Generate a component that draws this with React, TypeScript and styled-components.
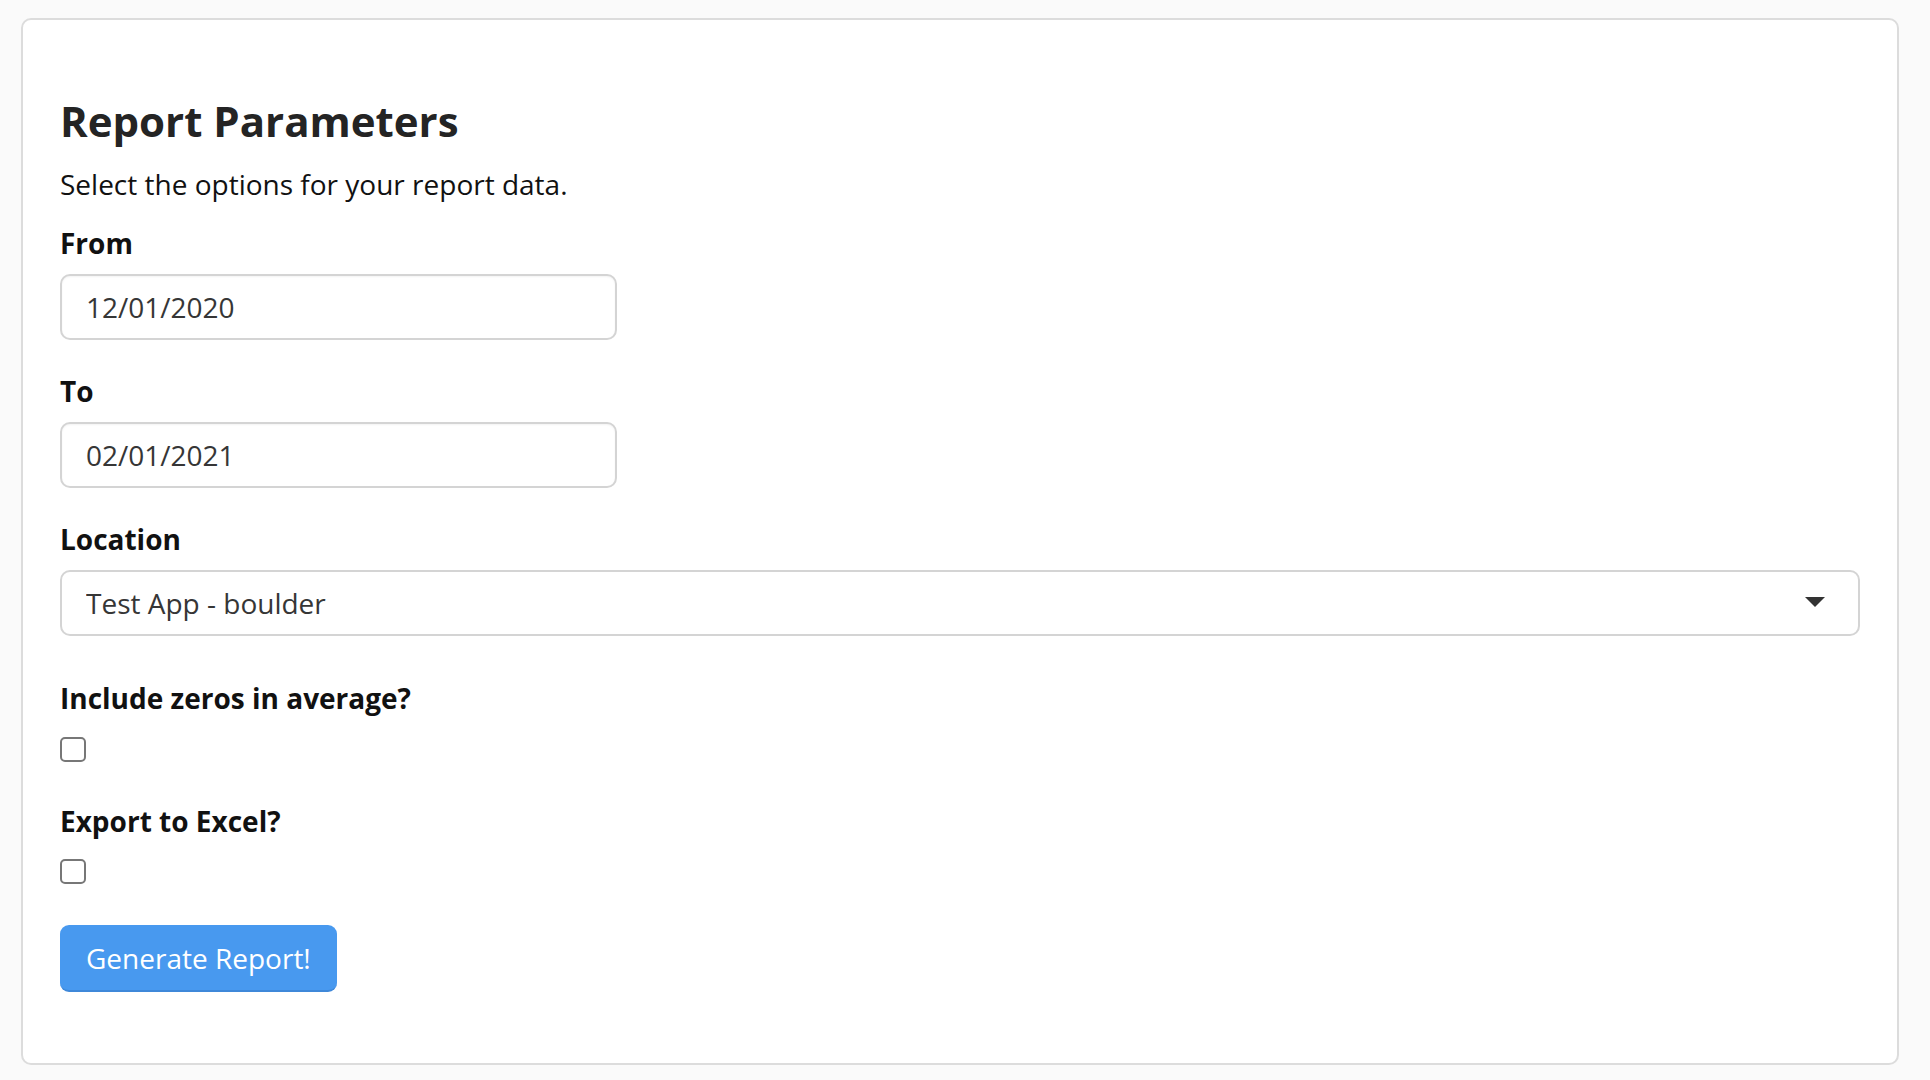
import React, { useState } from 'react';
import styled, { createGlobalStyle } from 'styled-components';

const GlobalStyle = createGlobalStyle`
  html, body {
    margin: 0;
    padding: 0;
    background: #fafafa;
  }
  body {
    font-family: "Open Sans", "Noto Sans", sans-serif;
    color: #111;
  }
  * {
    box-sizing: border-box;
  }
`;

const Page = styled.div`
  padding: 18px 31px 17px 21px;
`;

const Card = styled.div`
  background: #fff;
  border: 2px solid #dcdcdc;
  border-radius: 10px;
  padding: 75px 37px 71px 37px;
`;

const Title = styled.h2`
  margin: 0 0 16px;
  font-size: 42px;
  line-height: 52px;
  font-weight: 700;
  color: #242424;
`;

const Subtitle = styled.p`
  margin: 0 0 19px;
  font-size: 28px;
  line-height: 42px;
  color: #111;
`;

const Field = styled.div<{ $gap?: number }>`
  display: flex;
  flex-direction: column;
  align-items: flex-start;
  margin-bottom: ${(p) => p.$gap ?? 32}px;
`;

const Label = styled.label<{ $space?: number }>`
  font-size: 28px;
  line-height: 39px;
  font-weight: 700;
  color: #111;
  margin-bottom: ${(p) => p.$space ?? 11}px;
`;

const Input = styled.input`
  width: 557px;
  height: 66px;
  padding: 0 24px;
  border: 2px solid #d4d4d4;
  border-radius: 10px;
  font-family: "Open Sans", "Noto Sans", sans-serif;
  font-size: 28px;
  color: #363636;
  background: #fff;
  box-shadow: inset 0 1px 2px rgba(10, 10, 10, 0.05);
  outline: none;
`;

const SelectWrap = styled.div`
  position: relative;
  width: 100%;
`;

const Select = styled.select`
  width: 100%;
  height: 66px;
  padding: 0 70px 0 24px;
  border: 2px solid #d4d4d4;
  border-radius: 10px;
  font-family: "Open Sans", "Noto Sans", sans-serif;
  font-size: 28px;
  color: #363636;
  background: #fff;
  appearance: none;
  outline: none;
`;

const Caret = styled.svg`
  position: absolute;
  right: 35px;
  top: 27px;
  pointer-events: none;
`;

const Checkbox = styled.input`
  appearance: none;
  margin: 0;
  width: 26px;
  height: 25px;
  border: 2px solid #777;
  border-radius: 5px;
  background: #fff;
  cursor: pointer;

  &:checked {
    background: #4899ef;
    border-color: #4899ef;
  }
`;

const Button = styled.button`
  height: 67px;
  padding: 0 26px;
  background: #4899ef;
  color: #fff;
  border: none;
  border-bottom: 2px solid #3f88d9;
  border-radius: 9px;
  font-family: "Open Sans", "Noto Sans", sans-serif;
  font-size: 28px;
  cursor: pointer;

  &:hover {
    background: #3d8ee6;
  }
`;

const ReportParameters = () => {
  const [from, setFrom] = useState('12/01/2020');
  const [to, setTo] = useState('02/01/2021');
  const [location, setLocation] = useState('boulder');
  const [zeros, setZeros] = useState(false);
  const [excel, setExcel] = useState(false);

  return (
    <Page>
      <GlobalStyle />
      <Card>
        <Title>Report Parameters</Title>
        <Subtitle>Select the options for your report data.</Subtitle>
        <form onSubmit={(e) => e.preventDefault()}>
          <Field>
            <Label>From</Label>
            <Input type="text" value={from} onChange={(e) => setFrom(e.target.value)} />
          </Field>
          <Field>
            <Label>To</Label>
            <Input type="text" value={to} onChange={(e) => setTo(e.target.value)} />
          </Field>
          <Field $gap={43}>
            <Label>Location</Label>
            <SelectWrap>
              <Select value={location} onChange={(e) => setLocation(e.target.value)}>
                <option value="boulder">Test App - boulder</option>
              </Select>
              <Caret width="20" height="10" viewBox="0 0 20 10">
                <path d="M0 0 L20 0 L10 10 Z" fill="#333" />
              </Caret>
            </SelectWrap>
          </Field>
          <Field $gap={40}>
            <Label $space={19}>Include zeros in average?</Label>
            <Checkbox type="checkbox" checked={zeros} onChange={(e) => setZeros(e.target.checked)} />
          </Field>
          <Field $gap={41}>
            <Label $space={18}>Export to Excel?</Label>
            <Checkbox type="checkbox" checked={excel} onChange={(e) => setExcel(e.target.checked)} />
          </Field>
          <Button type="submit">Generate Report!</Button>
        </form>
      </Card>
    </Page>
  );
};

export default function App() {
  return <ReportParameters />;
}
